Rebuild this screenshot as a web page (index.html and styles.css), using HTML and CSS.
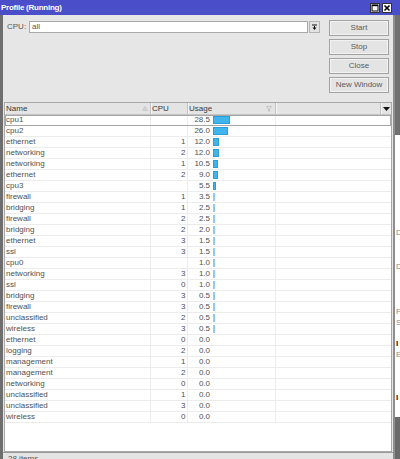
FILE: index.html
```html
<!DOCTYPE html>
<html>
<head>
<meta charset="utf-8">
<link rel="stylesheet" href="styles.css">
</head>
<body>
<div class="screen">
  <div class="titlebar">
    <span class="title">Profile (Running)</span>
    <span class="tb-btns">
      <span class="tb-btn"><svg width="8" height="8" viewBox="0 0 8 8"><rect x="1" y="1" width="6" height="6" fill="none" stroke="#000" stroke-width="1"/><line x1="1" y1="1.5" x2="7" y2="1.5" stroke="#000" stroke-width="1.4"/></svg></span>
      <span class="tb-btn"><svg width="8" height="8" viewBox="0 0 8 8"><path d="M1.5 1.5 L6.5 6.5 M6.5 1.5 L1.5 6.5" stroke="#000" stroke-width="1.6"/></svg></span>
    </span>
  </div>
  <div class="main">
    <div class="win">
      <div class="top">
        <div class="cpu-row">
          <span class="label">CPU:</span>
          <div class="input">all</div>
          <div class="dd"><svg width="7" height="7" viewBox="0 0 7 7"><line x1="1" y1="1" x2="6" y2="1" stroke="#111" stroke-width="1"/><path d="M3 2 H4 V3.5 H5.5 L3.5 6 L1.5 3.5 H3 Z" fill="#111"/></svg></div>
        </div>
        <div class="actions">
          <div class="btn">Start</div>
          <div class="btn">Stop</div>
          <div class="btn">Close</div>
          <div class="btn">New Window</div>
        </div>
      </div>
      <div class="grid">
        <div class="ghead">
          <div class="hc hc-name">Name<svg class="sort" width="6" height="5" viewBox="0 0 6 5"><path d="M3 0.5 L5.5 4.5 H0.5 Z" fill="#d4d4d4" stroke="#c0c0c0" stroke-width="0.6"/></svg></div>
          <div class="hc">CPU</div>
          <div class="hc hc-usage">Usage<svg class="filt" width="6" height="6" viewBox="0 0 6 6"><path d="M0.5 0.5 H5.5 L3.5 3 V5.5 L2.5 5 V3 Z" fill="none" stroke="#bdbdbd" stroke-width="0.8"/></svg></div>
          <div class="hc"></div>
          <div class="hc hc-arrow"><svg width="7" height="4" viewBox="0 0 7 4"><path d="M0 0 H7 L3.5 4 Z" fill="#111"/></svg></div>
        </div>
        <div class="gbody">
          <div class="row sel"><div class="c name">cpu1</div><div class="c cpu"></div><div class="c usage"><span class="num">28.5</span><span class="bar big" style="width:17px"></span></div><div class="c"></div></div>
          <div class="row"><div class="c name">cpu2</div><div class="c cpu"></div><div class="c usage"><span class="num">26.0</span><span class="bar big" style="width:15px"></span></div><div class="c"></div></div>
          <div class="row"><div class="c name">ethernet</div><div class="c cpu">1</div><div class="c usage"><span class="num">12.0</span><span class="bar big" style="width:6px"></span></div><div class="c"></div></div>
          <div class="row"><div class="c name">networking</div><div class="c cpu">2</div><div class="c usage"><span class="num">12.0</span><span class="bar big" style="width:6px"></span></div><div class="c"></div></div>
          <div class="row"><div class="c name">networking</div><div class="c cpu">1</div><div class="c usage"><span class="num">10.5</span><span class="bar big" style="width:5px"></span></div><div class="c"></div></div>
          <div class="row"><div class="c name">ethernet</div><div class="c cpu">2</div><div class="c usage"><span class="num">9.0</span><span class="bar big" style="width:5px"></span></div><div class="c"></div></div>
          <div class="row"><div class="c name">cpu3</div><div class="c cpu"></div><div class="c usage"><span class="num">5.5</span><span class="bar big" style="width:3px"></span></div><div class="c"></div></div>
          <div class="row"><div class="c name">firewall</div><div class="c cpu">1</div><div class="c usage"><span class="num">3.5</span><span class="bar small"></span></div><div class="c"></div></div>
          <div class="row"><div class="c name">bridging</div><div class="c cpu">1</div><div class="c usage"><span class="num">2.5</span><span class="bar small"></span></div><div class="c"></div></div>
          <div class="row"><div class="c name">firewall</div><div class="c cpu">2</div><div class="c usage"><span class="num">2.5</span><span class="bar small"></span></div><div class="c"></div></div>
          <div class="row"><div class="c name">bridging</div><div class="c cpu">2</div><div class="c usage"><span class="num">2.0</span><span class="bar small"></span></div><div class="c"></div></div>
          <div class="row"><div class="c name">ethernet</div><div class="c cpu">3</div><div class="c usage"><span class="num">1.5</span><span class="bar small"></span></div><div class="c"></div></div>
          <div class="row"><div class="c name">ssl</div><div class="c cpu">3</div><div class="c usage"><span class="num">1.5</span><span class="bar small"></span></div><div class="c"></div></div>
          <div class="row"><div class="c name">cpu0</div><div class="c cpu"></div><div class="c usage"><span class="num">1.0</span><span class="bar small"></span></div><div class="c"></div></div>
          <div class="row"><div class="c name">networking</div><div class="c cpu">3</div><div class="c usage"><span class="num">1.0</span><span class="bar small"></span></div><div class="c"></div></div>
          <div class="row"><div class="c name">ssl</div><div class="c cpu">0</div><div class="c usage"><span class="num">1.0</span><span class="bar small"></span></div><div class="c"></div></div>
          <div class="row"><div class="c name">bridging</div><div class="c cpu">3</div><div class="c usage"><span class="num">0.5</span><span class="bar small"></span></div><div class="c"></div></div>
          <div class="row"><div class="c name">firewall</div><div class="c cpu">3</div><div class="c usage"><span class="num">0.5</span><span class="bar small"></span></div><div class="c"></div></div>
          <div class="row"><div class="c name">unclassified</div><div class="c cpu">2</div><div class="c usage"><span class="num">0.5</span><span class="bar small"></span></div><div class="c"></div></div>
          <div class="row"><div class="c name">wireless</div><div class="c cpu">3</div><div class="c usage"><span class="num">0.5</span><span class="bar small"></span></div><div class="c"></div></div>
          <div class="row"><div class="c name">ethernet</div><div class="c cpu">0</div><div class="c usage"><span class="num">0.0</span></div><div class="c"></div></div>
          <div class="row"><div class="c name">logging</div><div class="c cpu">2</div><div class="c usage"><span class="num">0.0</span></div><div class="c"></div></div>
          <div class="row"><div class="c name">management</div><div class="c cpu">1</div><div class="c usage"><span class="num">0.0</span></div><div class="c"></div></div>
          <div class="row"><div class="c name">management</div><div class="c cpu">2</div><div class="c usage"><span class="num">0.0</span></div><div class="c"></div></div>
          <div class="row"><div class="c name">networking</div><div class="c cpu">0</div><div class="c usage"><span class="num">0.0</span></div><div class="c"></div></div>
          <div class="row"><div class="c name">unclassified</div><div class="c cpu">1</div><div class="c usage"><span class="num">0.0</span></div><div class="c"></div></div>
          <div class="row"><div class="c name">unclassified</div><div class="c cpu">3</div><div class="c usage"><span class="num">0.0</span></div><div class="c"></div></div>
          <div class="row"><div class="c name">wireless</div><div class="c cpu">0</div><div class="c usage"><span class="num">0.0</span></div><div class="c"></div></div>
        </div>
      </div>
      <div class="status">28 items</div>
    </div>
    <div class="desk">
      <div class="desk-top"></div>
      <div class="desk-mid">
        <div class="frag f1">D</div>
        <div class="frag f2">D</div>
        <div class="frag f3">F</div>
        <div class="frag f4">S</div>
        <div class="frag f5 dark">I</div>
        <div class="frag f4">E</div>
        <div class="frag f6 dark">I</div>
      </div>
      <div class="desk-bot"></div>
    </div>
  </div>
</div>
</body>
</html>
```

FILE: styles.css
```css
* { box-sizing: border-box; }
html, body {
  margin: 0;
  padding: 0;
  width: 400px;
  height: 459px;
  overflow: hidden;
  background: #ffffff;
  font-family: "Liberation Sans", Arial, sans-serif;
  font-size: 8px;
  color: #505050;
}
.screen {
  width: 400px;
  height: 459px;
  display: flex;
  flex-direction: column;
}
.titlebar {
  height: 15px;
  flex: none;
  background: #4a4ec8;
  display: flex;
  align-items: center;
  justify-content: space-between;
  padding: 0 8px 0 1px;
}
.title {
  color: #ffffff;
  font-weight: bold;
  font-size: 8px;
  letter-spacing: -0.25px;
  line-height: 15px;
}
.tb-btns {
  display: flex;
  gap: 2px;
}
.tb-btn {
  width: 10px;
  height: 10px;
  background: #ffffff;
  border: 1px solid #303030;
  display: flex;
  align-items: center;
  justify-content: center;
}
.tb-btn svg { display: block; }
.main {
  flex: 1;
  display: flex;
  min-height: 0;
}
.win {
  width: 395px;
  flex: none;
  background: #e6e6e6;
  border-left: 3px solid #6e6e6e;
  border-right: 2px solid #8e8e8e;
  display: flex;
  flex-direction: column;
}
.top {
  display: flex;
  padding: 5px 4px 0 4px;
  height: 87px;
  flex: none;
}
.cpu-row {
  flex: 1;
  display: flex;
  align-items: flex-start;
  padding-top: 1px;
}
.label {
  width: 22px;
  line-height: 12px;
  color: #555;
}
.input {
  width: 279px;
  height: 12px;
  background: #ffffff;
  border: 1px solid #a9a9a9;
  padding-left: 2px;
  line-height: 10px;
  color: #555;
}
.dd {
  width: 11px;
  height: 12px;
  margin-left: 1px;
  background: #e4e4e4;
  border: 1px solid #b4b4b4;
  display: flex;
  align-items: center;
  justify-content: center;
}
.dd svg { display: block; }
.actions {
  width: 60px;
  margin-left: 9px;
  display: flex;
  flex-direction: column;
  gap: 3px;
}
.btn {
  height: 16px;
  border: 1px solid #a2a2a2;
  box-shadow: inset 0 0 0 1px #f2f2f2;
  background: #e4e4e4;
  color: #5a5a5a;
  text-align: center;
  line-height: 14px;
}
.grid {
  height: 350px;
  flex: none;
  margin: 0 1px;
  background: #ffffff;
  border: 1px solid #a8a8a8;
  display: flex;
  flex-direction: column;
  overflow: hidden;
}
.ghead {
  height: 12px;
  flex: none;
  display: grid;
  grid-template-columns: 146px 37px 88px 1fr 10px;
  background: #e4e4e4;
  border-bottom: 1px solid #c4c4c4;
}
.hc {
  border-right: 1px solid #c2c2c2;
  box-shadow: inset 1px 0 0 #f6f6f6;
  padding-left: 1px;
  line-height: 11px;
  color: #3a3a3a;
  display: flex;
  align-items: center;
  justify-content: space-between;
}
.hc:last-child { border-right: none; }
.hc .sort { margin-right: 2px; }
.hc .filt { margin-right: 3px; }
.hc-arrow {
  justify-content: center;
  padding-left: 0;
}
.hc-arrow svg { display: block; }
.gbody {
  flex: 1;
  display: flex;
  flex-direction: column;
}
.row {
  height: 11px;
  flex: none;
  display: grid;
  grid-template-columns: 146px 37px 88px 1fr;
  border-bottom: 1px solid #ececec;
}
.row.sel {
  outline: 1px solid #a6a6a6;
  outline-offset: -1px;
}
.c {
  border-right: 1px solid #ececec;
  line-height: 10px;
  white-space: nowrap;
  overflow: hidden;
}
.c:last-child { border-right: none; }
.name { padding-left: 1px; }
.cpu {
  text-align: right;
  padding-right: 1.5px;
}
.usage {
  display: flex;
  align-items: flex-start;
}
.num {
  width: 22px;
  text-align: right;
  flex: none;
}
.bar {
  display: block;
  height: 8px;
  margin-top: 1px;
  margin-left: 3px;
  flex: none;
}
.bar.big {
  background: #40b5ed;
  border: 1px solid #2a9edb;
}
.bar.small {
  width: 2px;
  background: #86cff2;
}
.status {
  flex: 1;
  background: #e4e4e4;
  border-top: 1px solid #9a9a9a;
  padding: 1px 0 0 5px;
  line-height: 10px;
  color: #555;
}
.desk {
  flex: 1;
  display: flex;
  flex-direction: column;
  overflow: hidden;
}
.desk-top {
  height: 120px;
  flex: none;
  background: #707070;
}
.desk-mid {
  height: 282px;
  flex: none;
  background: #ffffff;
  padding-left: 1px;
}
.desk-bot {
  flex: 1;
  background: #6a6a6a;
}
.frag {
  line-height: 10px;
  height: 10px;
  font-size: 8px;
  color: #8a8a8a;
}
.frag.dark { color: #111; font-weight: bold; }
.f1 { margin-top: 93px; }
.f2 { margin-top: 24px; }
.f3 { margin-top: 35px; }
.f4 { margin-top: 1px; }
.f5 { margin-top: 11px; }
.f6 { margin-top: 33px; }
```
